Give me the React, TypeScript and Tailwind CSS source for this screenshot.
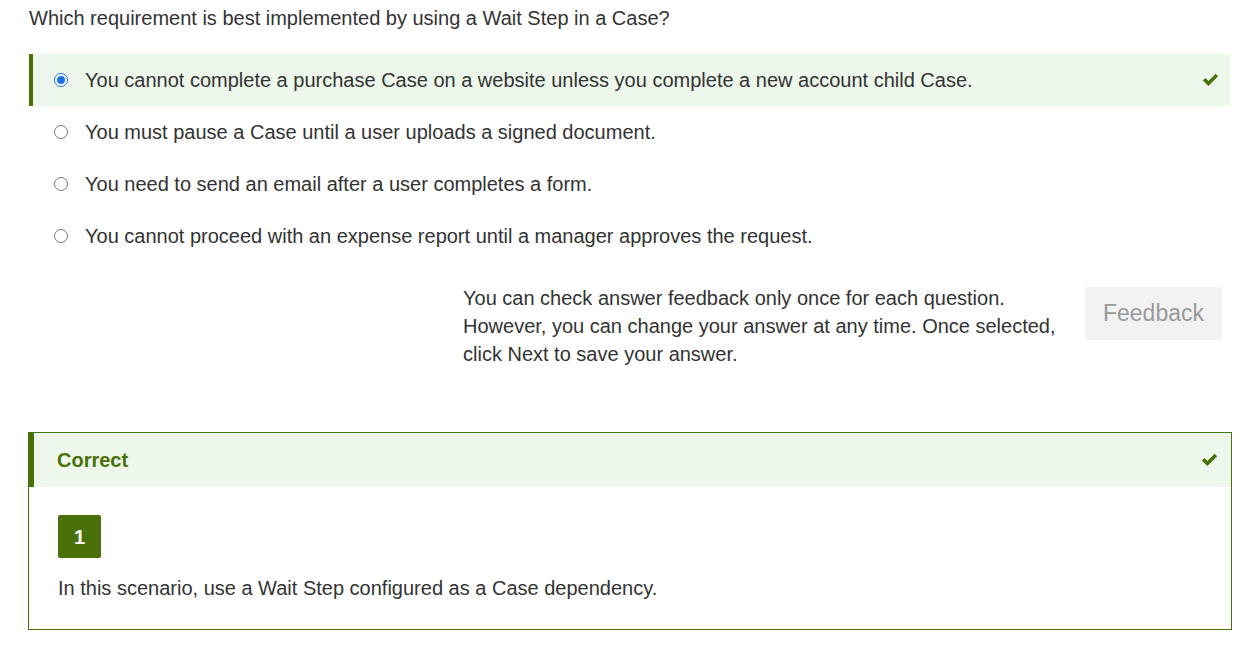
import React from 'react';

const answers = [
  'You cannot complete a purchase Case on a website unless you complete a new account child Case.',
  'You must pause a Case until a user uploads a signed document.',
  'You need to send an email after a user completes a form.',
  'You cannot proceed with an expense report until a manager approves the request.',
];

const Check = () => (
  <svg width="17" height="14" viewBox="0 0 16 13" className="text-[#4a7109]">
    <path d="M0.8 7 L3.2 4.6 L6 7.4 L12.8 0.6 L15.2 3 L6 12.2 Z" fill="currentColor" />
  </svg>
);

const Radio = ({ checked }: { checked: boolean }) =>
  checked ? (
    <span className="flex h-[14px] w-[14px] items-center justify-center rounded-full border border-[#1a73e8] bg-white">
      <span className="h-[8px] w-[8px] rounded-full bg-[#1a73e8]" />
    </span>
  ) : (
    <span className="h-[14px] w-[14px] rounded-full border border-[#767676] bg-white" />
  );

export default function App() {
  return (
    <div
      className="min-h-screen bg-white text-[20px] text-[#333333]"
      style={{ fontFamily: '"Liberation Sans", Arial, sans-serif' }}
    >
      <div className="pl-[29px] pr-[30px] pt-[4px]">
        <p className="leading-[28px]">Which requirement is best implemented by using a Wait Step in a Case?</p>

        <div className="mt-[22px] flex flex-col">
          {answers.map((a, i) => (
            <div
              key={i}
              className={
                i === 0
                  ? 'flex h-[52px] items-center border-l-4 border-[#4a7109] bg-[#eef7ec] pl-[21px] pr-[11px]'
                  : 'flex h-[52px] items-center pl-[25px] pr-[11px]'
              }
            >
              <Radio checked={i === 0} />
              <span className="ml-[17px] flex-1">{a}</span>
              {i === 0 && <Check />}
            </div>
          ))}
        </div>

        <div className="mt-[22px] flex justify-end pr-[8px]">
          <p className="w-[613px] leading-[28px]">
            You can check answer feedback only once for each question. However, you can change your answer at any time. Once selected, click Next to save your answer.
          </p>
          <button className="ml-[9px] mt-[3px] h-[53px] w-[137px] self-start rounded-[2px] bg-[#f2f2f2] text-[23px] text-[#999999]">
            Feedback
          </button>
        </div>

        <div className="mt-[64px] ml-[-1px] mr-[-2px] border border-[#4a7109]">
          <div className="flex h-[54px] items-center justify-between border-l-[5px] border-[#4a7109] bg-[#eef7ec] pl-[23px] pr-[13px]">
            <span className="font-bold text-[#4a7109] leading-none">Correct</span>
            <Check />
          </div>
          <div className="px-[29px] pb-[27px] pt-[28px]">
            <div className="flex h-[43px] w-[43px] items-center justify-center rounded-[2px] bg-[#4a7109] font-bold text-white">
              1
            </div>
            <p className="mt-[16px] leading-[28px]">In this scenario, use a Wait Step configured as a Case dependency.</p>
          </div>
        </div>
      </div>
    </div>
  );
}
